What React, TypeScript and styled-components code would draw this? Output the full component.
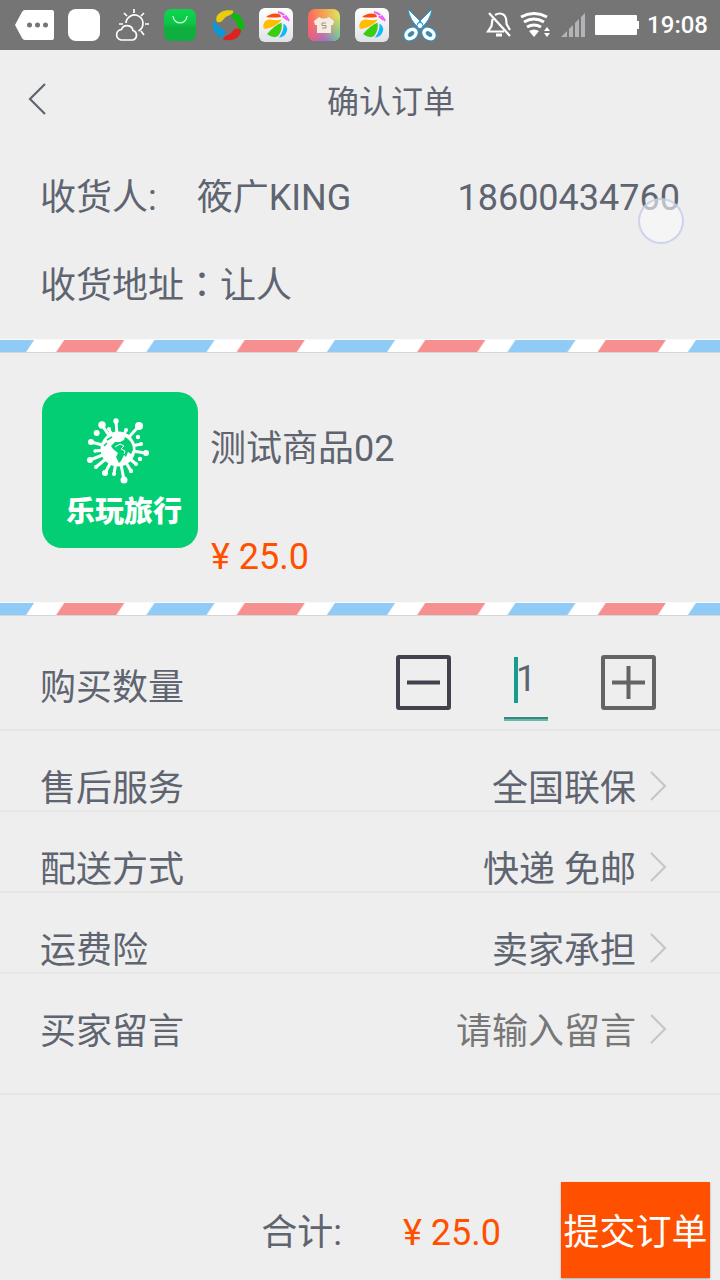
import React, { useState } from "react";
import styled, { createGlobalStyle } from "styled-components";

const ink = "#5e6470";
const accent = "#ff5000";
const line = "#e6e6e6";

const GlobalStyle = createGlobalStyle`
  * { box-sizing: border-box; }
  html, body { margin: 0; background: #eeeeee; }
  body, button, input {
    font-family: Roboto, "Noto Sans CJK SC", sans-serif;
    font-size: 36px;
    line-height: 48px;
    color: ${ink};
  }
  button, input { margin: 0; padding: 0; border: 0; background: none; }
  svg { display: block; flex: none; }
`;

const Page = styled.main`
  position: relative;
  display: flex;
  flex-direction: column;
  min-height: 100vh;
`;

const StatusBar = styled.div`
  display: flex;
  align-items: center;
  justify-content: space-between;
  height: 50px;
  padding: 0 12px 0 14px;
  background: #757575;
`;

const StatusGroup = styled.div<{ $gap: number }>`
  display: flex;
  align-items: center;
  gap: ${(p) => p.$gap}px;
`;

const Clock = styled.time`
  font-size: 24px;
  font-weight: 500;
  line-height: 32px;
  color: #fff;
`;

const Header = styled.header`
  display: grid;
  grid-template-columns: 62px 1fr;
  align-items: center;
  height: 98px;
`;

const BackButton = styled.button`
  display: flex;
  align-items: center;
  height: 98px;
  padding-left: 27px;
`;

const Title = styled.h1`
  margin: 0;
  padding-top: 6px;
  font-size: 32px;
  font-weight: 400;
  line-height: 48px;
  text-align: center;
`;

const Address = styled.section`
  display: flex;
  flex-direction: column;
  gap: 40px;
  padding: 26px 40px 29px;
`;

const AddressLine = styled.div`
  display: flex;
`;

const Recipient = styled.span`
  margin-left: 40px;
`;

const Phone = styled.span`
  margin-left: auto;
`;

const WideColon = styled.span`
  font-family: "Noto Sans CJK TC", sans-serif;
  line-height: 1;
`;

const StripeSvg = styled.svg`
  width: 100%;
  height: 14px;
`;

const Product = styled.section`
  display: flex;
  gap: 12px;
  padding: 39px 40px 21px 42px;
`;

const Thumb = styled.div`
  display: flex;
  flex-direction: column;
  align-items: center;
  width: 156px;
  height: 156px;
  padding-top: 24px;
  border-radius: 20px;
  background: #03ce74;
`;

const ThumbText = styled.span`
  margin-top: 8px;
  padding-left: 8px;
  font-size: 29px;
  font-weight: 900;
  line-height: 40px;
  color: #fff;
`;

const ProductInfo = styled.div`
  display: flex;
  flex-direction: column;
  justify-content: space-between;
  height: 189px;
  padding-top: 33px;
`;

const ProductName = styled.h2`
  margin: 0;
  font-size: 36px;
  font-weight: 400;
  line-height: 48px;
`;

const Price = styled.span`
  padding-left: 1px;
  color: ${accent};
`;

const QuantityRow = styled.div`
  display: flex;
  align-items: center;
  justify-content: space-between;
  height: 115px;
  padding: 31px 63px 0 40px;
  border-bottom: 2px solid ${line};
`;

const Stepper = styled.div`
  display: flex;
  align-items: center;
  gap: 52px;
  padding-bottom: 12px;
`;

const StepButton = styled.button`
  display: flex;
`;

const QuantityField = styled.div`
  position: relative;
  height: 68px;
  margin-top: 6px;
  border-bottom: 2px solid #3a877d;
  box-shadow: 0 2px 0 #66bbb0;
`;

const QuantityInput = styled.input`
  display: block;
  width: 44px;
  height: 56px;
  text-align: center;
  outline: none;
`;

const Caret = styled.span`
  position: absolute;
  top: 6px;
  left: 10px;
  width: 4px;
  height: 46px;
  background: #159c8c;
`;

const OptionRow = styled.div<{ $tall?: boolean }>`
  display: flex;
  justify-content: space-between;
  height: ${(p) => (p.$tall ? 121 : 81)}px;
  padding: 34px 52px 0 40px;
  border-bottom: 2px solid ${line};
`;

const OptionValue = styled.button`
  display: flex;
  align-items: center;
  gap: 12px;
  height: 48px;
`;

const MessageField = styled.div`
  display: flex;
  align-items: center;
  gap: 12px;
  height: 48px;
`;

const MessageInput = styled.input`
  width: 240px;
  height: 48px;
  text-align: right;
  outline: none;
  &::placeholder { color: #777; opacity: 1; }
`;

const ChevronSvg = styled.svg`
  margin-bottom: 6px;
`;

const Footer = styled.footer`
  display: flex;
  align-items: center;
  justify-content: flex-end;
  gap: 60px;
  margin-top: auto;
  padding: 0 10px 2px;
`;

const Total = styled.div`
  display: flex;
  gap: 60px;
  padding-top: 5px;
`;

const Submit = styled.button`
  width: 149px;
  height: 96px;
  padding-top: 5px;
  background: ${accent};
  color: #fff;
  white-space: nowrap;
  box-shadow: 0 1px 2px rgba(0, 0, 0, 0.3);
`;

const TouchDot = styled.span`
  position: absolute;
  top: 198px;
  right: 36px;
  width: 46px;
  height: 46px;
  border: 2px solid rgba(190, 198, 230, 0.75);
  border-radius: 50%;
  background: rgba(250, 250, 250, 0.6);
  pointer-events: none;
`;

function Stripe({ id }: { id: string }) {
  return (
    <StripeSvg viewBox="0 0 718 14" preserveAspectRatio="none" aria-hidden="true">
      <defs>
        <pattern id={id} width="180" height="12" y="1" patternUnits="userSpaceOnUse">
          <rect width="180" height="12" fill="#fff" />
          <path d="M-26 0H34L26 12H-34ZM154 0H214L206 12H146Z" fill="#90caf6" />
          <path d="M64 0H124L116 12H56Z" fill="#f69090" />
        </pattern>
      </defs>
      <rect width="718" height="1" fill="#fafafa" />
      <rect y="1" width="718" height="12" fill={`url(#${id})`} />
      <rect y="13" width="718" height="1" fill="#d6d6d6" />
    </StripeSvg>
  );
}

function BallIcon({ id }: { id: string }) {
  return (
    <svg width="34" height="34" viewBox="0 0 34 34" aria-hidden="true">
      <defs>
        <linearGradient id={id} x2="0" y2="1">
          <stop stopColor="#fff" />
          <stop offset="1" stopColor="#dfe2e8" />
        </linearGradient>
      </defs>
      <rect width="34" height="34" rx="6" fill={`url(#${id})`} />
      <path d="M7 9Q13 4 20 6Q22 7 22 9Q14 10 7 9Z" fill="#ff4a0a" />
      <path d="M6 21Q3 20 5 15Q7 11 11 11.500Q18 13 23 11.500Q17 19 6 21Z" fill="#ffbd00" />
      <path d="M8 26Q16 17 22.500 14.500Q24 22 19 28Q14 31 8 26Z" fill="#3ecb12" />
      <path d="M20 29.500Q25 23 24.500 15.500Q29 18 28 23Q26 29 20 29.500Z" fill="#12b9fa" />
      <path d="M19 4Q27 6 30 13M23.500 8.500Q26 9 28 12" fill="none" stroke="#ee62f3" strokeWidth="2" strokeDasharray="7 1" />
    </svg>
  );
}

function Notifications() {
  return (
    <StatusGroup $gap={14} aria-hidden="true">
      <svg width="40" height="32" viewBox="0 0 40 32">
        <path d="M11 1H38Q40 1 40 3V29Q40 31 38 31H11Q9 31 8 29L1 16L8 3Q9 1 11 1Z" fill="#fff" />
        <g fill="#757575"><circle cx="15.500" cy="16" r="2.500" /><circle cx="23.500" cy="16" r="2.500" /><circle cx="31.500" cy="16" r="2.500" /></g>
      </svg>
      <svg width="32" height="32"><rect width="32" height="32" rx="8" fill="#fff" /></svg>
      <svg width="36" height="32" viewBox="-1 0 36 32" fill="none" stroke="#fff" strokeWidth="1.700">
        <path d="M11 14A8.500 8.500 0 1 1 23.500 22M19 0V4M9 4L12 7M29 4L26 7M4 15H8M30 15H34M26 22L29 26" />
        <path d="M6 31H18A5 5 0 0 0 18 21.500A6 6 0 0 0 6.500 20.500A5.300 5.300 0 0 0 6 31Z" />
      </svg>
      <svg width="32" height="32" viewBox="0 0 32 32">
        <defs><linearGradient id="bag" x2="0" y2="1"><stop stopColor="#0bd64f" /><stop offset=".45" stopColor="#0cc545" /><stop offset=".6" stopColor="#0eae3f" /><stop offset="1" stopColor="#0eae3f" /></linearGradient></defs>
        <rect width="32" height="32" rx="7" fill="url(#bag)" />
        <path d="M9 7C10 16 22 16 23 7" fill="none" stroke="#c8f7d5" strokeWidth="1.500" />
      </svg>
      <svg width="35" height="32" viewBox="-3 0 35 32">
        <path d="M4 13Q2 9 5 5.500Q10 0 20 1.500Q21 4 18 5.500Q13 7 10 11Q8 14 4 13Z" fill="#e8cd0b" />
        <path d="M19 5Q23 3 26 6Q31 11 31 18Q30 23 27 21Q25 20 24.500 16Q23 11 19 9Q18 7 19 5Z" fill="#0bb90f" />
        <path d="M28 21Q28 25 25 28Q19 33 10 30.500Q11 27 15 26Q18 25 20 21.500Q23 18 28 21Z" fill="#dc2222" />
        <path d="M0 14Q1 11 3 13Q4 17 8 19Q13 21 12 26Q11 29 7 28Q-1 23 0 14Z" fill="#0c97d8" />
      </svg>
      <BallIcon id="ball-a" />
      <svg width="34" height="32" viewBox="-1 0 34 32">
        <defs>
          <linearGradient id="shirt-top"><stop stopColor="#ff665c" /><stop offset=".5" stopColor="#f5a456" /><stop offset="1" stopColor="#dce75c" /></linearGradient>
          <linearGradient id="shirt-base"><stop stopColor="#f05a80" /><stop offset=".5" stopColor="#a66bc8" /><stop offset="1" stopColor="#59c9a0" /></linearGradient>
          <linearGradient id="shirt-fade" x2="0" y2="1"><stop offset=".2" stopColor="#000" /><stop offset="1" stopColor="#fff" /></linearGradient>
          <mask id="shirt-mask"><rect width="32" height="32" fill="url(#shirt-fade)" /></mask>
        </defs>
        <rect width="32" height="32" rx="7" fill="url(#shirt-top)" />
        <rect width="32" height="32" rx="7" fill="url(#shirt-base)" mask="url(#shirt-mask)" />
        <path d="M11 8Q16 11 21 8L26 12L25 16H23V24H9V16H7L6 12Z" fill="#f5ede3" />
        <path d="M18 14H14V16.500H18V19H14" fill="none" stroke="#a58e82" />
      </svg>
      <BallIcon id="ball-b" />
      <svg width="34" height="34" viewBox="0 0 34 34" fill="none">
        <path d="M5 1L20 16L16 20Q7 13 5 1ZM29 1L14 16L18 20Q27 13 29 1Z" fill="#fff" stroke="#1b9cdb" strokeLinejoin="round" />
        <g stroke="#1b9cdb" strokeWidth="5.500">
          <ellipse cx="8" cy="26" rx="5.500" ry="4" transform="rotate(-38 8 26)" />
          <ellipse cx="26" cy="26" rx="5.500" ry="4" transform="rotate(38 26 26)" />
        </g>
        <g stroke="#fff" strokeWidth="3.500">
          <ellipse cx="8" cy="26" rx="5.500" ry="4" transform="rotate(-38 8 26)" />
          <ellipse cx="26" cy="26" rx="5.500" ry="4" transform="rotate(38 26 26)" />
        </g>
        <circle cx="17" cy="17.500" r="3" fill="#fff" stroke="#1b9cdb" />
      </svg>
    </StatusGroup>
  );
}

function SystemStatus() {
  return (
    <StatusGroup $gap={8}>
      <svg width="26" height="26" viewBox="0 0 26 26" fill="none" stroke="#fff" strokeWidth="2.200" aria-hidden="true">
        <path d="M3 1L24 24M6.500 7L5.500 14L2 19.500H18M9 3Q14 0 18 3Q20.500 5 20.500 12L24 18" />
        <path d="M10 23H16" strokeWidth="3" />
      </svg>
      <svg width="32" height="26" viewBox="0 0 32 26" aria-hidden="true">
        <g fill="none" stroke="#fff" strokeWidth="3">
          <path d="M1 5Q14 -2 27 5M4 10Q14 4 24 10M7 15Q14 11 21 15" />
        </g>
        <path d="M9 19Q14 16 19 19L14 25ZM24 19L27 15L30 19ZM24 21H30L27 25Z" fill="#fff" />
      </svg>
      <svg width="27" height="24" viewBox="0 0 27 24" aria-hidden="true">
        <path d="M1 24L7 18V24ZM9 16L13 12V24H9ZM15 10L19 6V24H15ZM21 4L25 0V24H21Z" fill="#b3b3b8" />
      </svg>
      <svg width="44" height="20" viewBox="0 0 44 20" aria-hidden="true">
        <path d="M1 0H41Q42 0 42 1V6H44V14H42V19Q42 20 41 20H1Q0 20 0 19V1Q0 0 1 0Z" fill="#fff" />
      </svg>
      <Clock>19:08</Clock>
    </StatusGroup>
  );
}

function Splat() {
  const rays = [
    [29, 5, 2.7], [52, 10, 4], [15, 9, 3.7], [4, 26, 3], [3, 44, 3], [9, 51, 2], [18, 57, 3],
    [27, 58, 2], [37, 64, 3.5], [44, 55, 2.2], [59, 37, 3], [54, 28, 2], [39, 14, 2], [22, 13, 2],
    [8, 35, 1.7], [49, 48, 2],
  ];
  const drops = [[9.7, 17, 3], [53, 43, 2.2], [51, 21, 2.2]];
  return (
    <svg width="66" height="68" viewBox="0 0 66 68" aria-hidden="true">
      <g fill="#fff">
        {rays.map(([x, y, r]) => (
          <g key={`${x}-${y}`}>
            <circle cx={x} cy={y} r={r} />
            <path d={`M31 33L${x} ${y}`} stroke="#fff" strokeWidth="3" />
          </g>
        ))}
        {drops.map(([x, y, r]) => (
          <circle key={`${x}-${y}`} cx={x} cy={y} r={r} />
        ))}
        <circle cx="31" cy="33" r="17.500" />
      </g>
      <path d="M38 21Q46 25 46 34L44 38L41 36L39 41L37 39L34 45L32 47L29 41L31 37L26 33L24 30L28 26L33 26L37 24Z" fill="#03ce74" />
      <path d="M28 31L33 28L37 30L34 33L38 35L37 38" fill="none" stroke="#fff" strokeWidth="1" />
      <path d="M20 24L25 21M17 30L20 27" stroke="#03ce74" strokeWidth="1.500" />
    </svg>
  );
}

function Chevron() {
  return (
    <ChevronSvg width="20" height="32" viewBox="0 0 20 32" fill="none" stroke="#c6c6c6" strokeWidth="2.200" aria-hidden="true">
      <path d="M3 2L17 16L3 30" />
    </ChevronSvg>
  );
}

const options = [
  { label: "售后服务", value: "全国联保" },
  { label: "配送方式", value: "快递 免邮" },
  { label: "运费险", value: "卖家承担" },
];

export default function App() {
  const [count, setCount] = useState(1);
  return (
    <>
      <GlobalStyle />
      <Page>
        <StatusBar>
          <Notifications />
          <SystemStatus />
        </StatusBar>
        <Header>
          <BackButton aria-label="返回">
            <svg width="20" height="32" viewBox="0 0 20 32" fill="none" stroke={ink} strokeWidth="2.200">
              <path d="M18 1L3 16L18 31" />
            </svg>
          </BackButton>
          <Title>确认订单</Title>
        </Header>
        <Address>
          <AddressLine>
            <span>收货人:</span>
            <Recipient>筱广KING</Recipient>
            <Phone>18600434760</Phone>
          </AddressLine>
          <AddressLine>
            <span>收货地址<WideColon>：</WideColon>让人</span>
          </AddressLine>
        </Address>
        <Stripe id="stripe-top" />
        <Product>
          <Thumb>
            <Splat />
            <ThumbText>乐玩旅行</ThumbText>
          </Thumb>
          <ProductInfo>
            <ProductName>测试商品02</ProductName>
            <Price>¥ 25.0</Price>
          </ProductInfo>
        </Product>
        <Stripe id="stripe-bottom" />
        <QuantityRow>
          <label htmlFor="quantity">购买数量</label>
          <Stepper>
            <StepButton aria-label="减少" onClick={() => setCount(Math.max(1, count - 1))}>
              <svg width="57" height="57" viewBox="0 0 57 57" fill="none" stroke="#42424f" strokeWidth="4">
                <rect x="3" y="3" width="51" height="51" rx="1" />
                <path d="M12 28.500H45" />
              </svg>
            </StepButton>
            <QuantityField>
              <QuantityInput
                id="quantity"
                inputMode="numeric"
                value={count}
                onChange={(e) => setCount(Number(e.target.value) || 1)}
              />
              <Caret />
            </QuantityField>
            <StepButton aria-label="增加" onClick={() => setCount(count + 1)}>
              <svg width="57" height="57" viewBox="0 0 57 57" fill="none" stroke="#646464" strokeWidth="4">
                <rect x="3" y="3" width="51" height="51" rx="1" />
                <path d="M12 28.500H45M28.500 12V45" />
              </svg>
            </StepButton>
          </Stepper>
        </QuantityRow>
        {options.map((o) => (
          <OptionRow key={o.label}>
            <span>{o.label}</span>
            <OptionValue aria-label={`${o.label} ${o.value}`}>
              {o.value}
              <Chevron />
            </OptionValue>
          </OptionRow>
        ))}
        <OptionRow $tall>
          <label htmlFor="message">买家留言</label>
          <MessageField>
            <MessageInput id="message" placeholder="请输入留言" />
            <Chevron />
          </MessageField>
        </OptionRow>
        <Footer>
          <Total>
            <span>合计:</span>
            <Price>¥ 25.0</Price>
          </Total>
          <Submit>提交订单</Submit>
        </Footer>
        <TouchDot />
      </Page>
    </>
  );
}
